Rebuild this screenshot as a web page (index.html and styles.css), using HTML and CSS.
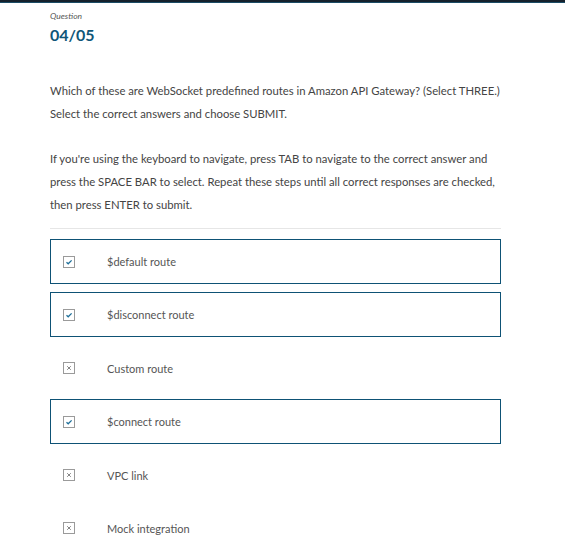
FILE: index.html
```html
<!DOCTYPE html>
<html>
<head>
<meta charset="utf-8">
<link rel="stylesheet" href="styles.css">
</head>
<body>
<div class="topbar"></div>
<main class="page">
  <div class="label">Question</div>
  <div class="counter">04/05</div>
  <div class="prompt">
    <p>Which of these are WebSocket predefined routes in Amazon API Gateway? (Select THREE.)<br>Select the correct answers and choose SUBMIT.</p>
    <p>If you're using the keyboard to navigate, press TAB to navigate to the correct answer and press the SPACE BAR to select. Repeat these steps until all correct responses are checked, then press ENTER to submit.</p>
  </div>
  <div class="divider"></div>
  <div class="options">
    <div class="option selected"><span class="box"><svg viewBox="0 0 12 12" width="12" height="12"><path d="M3.5 6.3 L5.2 7.8 L8.6 4.4" fill="none" stroke="#1f6f99" stroke-width="1.3"/></svg></span><span class="text">$default route</span></div>
    <div class="option selected"><span class="box"><svg viewBox="0 0 12 12" width="12" height="12"><path d="M3.5 6.3 L5.2 7.8 L8.6 4.4" fill="none" stroke="#1f6f99" stroke-width="1.3"/></svg></span><span class="text">$disconnect route</span></div>
    <div class="option"><span class="box"><svg viewBox="0 0 12 12" width="12" height="12"><path d="M4.2 4.2 L7.8 7.8 M7.8 4.2 L4.2 7.8" fill="none" stroke="#777" stroke-width="0.9"/></svg></span><span class="text">Custom route</span></div>
    <div class="option selected"><span class="box"><svg viewBox="0 0 12 12" width="12" height="12"><path d="M3.5 6.3 L5.2 7.8 L8.6 4.4" fill="none" stroke="#1f6f99" stroke-width="1.3"/></svg></span><span class="text">$connect route</span></div>
    <div class="option"><span class="box"><svg viewBox="0 0 12 12" width="12" height="12"><path d="M4.2 4.2 L7.8 7.8 M7.8 4.2 L4.2 7.8" fill="none" stroke="#777" stroke-width="0.9"/></svg></span><span class="text">VPC link</span></div>
    <div class="option"><span class="box"><svg viewBox="0 0 12 12" width="12" height="12"><path d="M4.2 4.2 L7.8 7.8 M7.8 4.2 L4.2 7.8" fill="none" stroke="#777" stroke-width="0.9"/></svg></span><span class="text">Mock integration</span></div>
  </div>
</main>
</body>
</html>
```
FILE: styles.css
```css
html, body {
  margin: 0;
  padding: 0;
  background: #fff;
}
body {
  font-family: Lato, "Open Sans", "Liberation Sans", sans-serif;
  color: #444;
}
.topbar {
  height: 3px;
  background: #15212c;
  border-bottom: 1px solid #1b4c66;
  box-sizing: border-box;
}
.page {
  width: 451px;
  padding: 8px 0 0 50px;
}
.label {
  font-size: 8.5px;
  font-style: italic;
  color: #555;
  line-height: 10px;
}
.counter {
  font-size: 16px;
  font-weight: 700;
  color: #0f5678;
  line-height: 20px;
  margin-top: 4px;
}
.prompt {
  margin-top: 34px;
  font-size: 11.3px;
  line-height: 23px;
  color: #444;
}
.prompt p {
  margin: 0 0 22px 0;
}
.prompt p:last-child {
  margin-bottom: 0;
}
.divider {
  height: 1px;
  background: #e6e6e6;
  margin-top: 12px;
}
.options {
  margin-top: 10px;
  display: flex;
  flex-direction: column;
  gap: 8.4px;
}
.option {
  height: 45px;
  box-sizing: border-box;
  border: 1px solid transparent;
  display: flex;
  align-items: center;
  padding-left: 12px;
  font-size: 11px;
  color: #555;
}
.option.selected {
  border: 1.5px solid #0e5275;
}
.box {
  width: 12px;
  height: 12px;
  box-sizing: border-box;
  border: 1px solid #9a9a9a;
  display: flex;
  align-items: center;
  justify-content: center;
  margin-right: 32px;
}
.box svg {
  display: block;
  flex: none;
}
```
